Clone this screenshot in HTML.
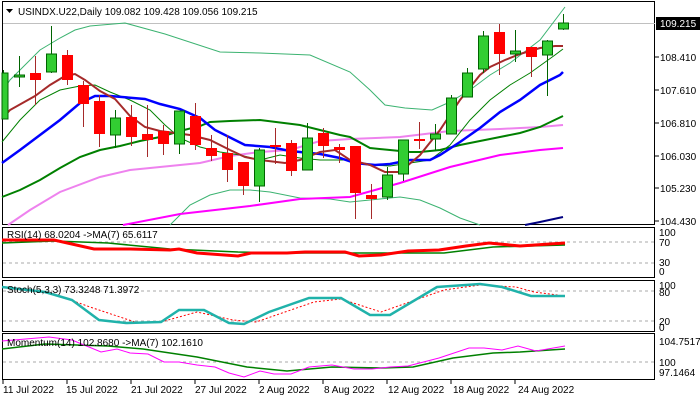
<!DOCTYPE html>
<html><head><meta charset="utf-8"><style>
body{margin:0;background:#fff;width:700px;height:400px;overflow:hidden}
svg{display:block;font-family:"Liberation Sans",sans-serif}
text{font-size:10px;fill:#000}
</style></head><body>
<svg width="700" height="400" viewBox="0 0 700 400" xmlns="http://www.w3.org/2000/svg">
<rect width="700" height="400" fill="#fff"/>
<g fill="none" stroke="#000" stroke-width="1">
<rect x="2.5" y="1.5" width="652" height="223"/>
<rect x="2.5" y="227.5" width="652" height="50"/>
<rect x="2.5" y="280.5" width="652" height="51"/>
<rect x="2.5" y="333.5" width="652" height="46"/>
</g>
<line x1="3" y1="23.5" x2="655" y2="23.5" stroke="#c0c0c0"/>
<polyline fill="none" stroke="#3cb371" stroke-width="1" points="2,92 10,80 20,70 40,50 60,38 75,30 90,26 125,23 165,34 220,52 260,53 310,55 350,72 370,90 385,105 405,108 432,110 450,102 470,90 490,75 510,63 540,40 565,7"/>
<polyline fill="none" stroke="#3cb371" stroke-width="1" points="170,225 190,205 210,195 230,190 250,190 270,192 300,198 330,199 350,202 380,199 400,197 420,200 440,208 460,218 480,225"/>
<polyline fill="none" stroke="#ee82ee" stroke-width="2" points="8,225 30,210 60,192 100,177 130,170 160,167 200,163 230,156 260,152 290,150 320,141 350,139 400,137 450,131 500,129 540,127 563,125"/>
<polyline fill="none" stroke="#ff00ff" stroke-width="2" points="123,225 180,214 250,206 300,199 350,197 400,183 450,167 500,155 540,150 563,148"/>
<polyline fill="none" stroke="#000080" stroke-width="2" points="525,225 540,222 563,217"/>
<polyline fill="none" stroke="#008000" stroke-width="2" points="2,197 20,190 40,180 60,168 80,157 100,150 120,146 140,141 160,137 180,131 200,126 210,122 230,121 260,120 300,125 320,130 340,135 350,137 370,148 390,150 410,152 420,152 440,150 460,145 480,141 500,137 520,133 540,127 563,116"/>
<polyline fill="none" stroke="#008000" stroke-width="1" points="2,142 20,120 40,100 60,90 80,86 95,85 110,92 130,100 150,110 165,125 180,138 200,147 220,152 240,155 260,160 280,155 300,158 320,160 350,160 370,165 390,166 410,163 430,160 450,145 470,120 490,100 510,85 530,73 555,55 563,49"/>
<polyline fill="none" stroke="#0000ff" stroke-width="2.5" points="2,163 20,150 40,135 60,120 80,103 95,96 110,96 145,99 160,104 180,109 200,118 215,130 245,145 270,147 290,151 320,154 340,158 355,163 375,165 390,164 410,160 430,160 440,155 460,142 480,128 500,112 520,100 540,85 560,75 563,72"/>
<polyline fill="none" stroke="#a52a2a" stroke-width="2" points="2,119 10,110 35,96 50,85 65,76 75,74 85,80 100,91 115,99 130,116 145,127 160,131 175,133 190,135 210,140 230,150 245,157 260,160 285,163 300,160 320,152 335,150 350,160 370,165 385,172 400,172 420,155 440,130 460,100 480,75 490,67 505,60 520,54 540,48 555,46 563,46"/>
<g stroke-width="1">
<g stroke="#006400">
<line x1="3.5" y1="70" x2="3.5" y2="119"/><rect x="2" y="73" width="6" height="46" fill="#32cd32"/>
<line x1="19.5" y1="56" x2="19.5" y2="87"/><rect x="14.5" y="75" width="10" height="2" fill="#32cd32"/>
<line x1="51.5" y1="26" x2="51.5" y2="73"/><rect x="46.5" y="54" width="10" height="18" fill="#32cd32"/>
<line x1="115.5" y1="110" x2="115.5" y2="148"/><rect x="110.5" y="118" width="10" height="17" fill="#32cd32"/>
<line x1="179.5" y1="111" x2="179.5" y2="154"/><rect x="174.5" y="111" width="10" height="33" fill="#32cd32"/>
<line x1="259.5" y1="148" x2="259.5" y2="202"/><rect x="254.5" y="150" width="10" height="36" fill="#32cd32"/>
<line x1="307.5" y1="123" x2="307.5" y2="170"/><rect x="302.5" y="138" width="10" height="32" fill="#32cd32"/>
<line x1="387.5" y1="167" x2="387.5" y2="200"/><rect x="382.5" y="175" width="10" height="22" fill="#32cd32"/>
<line x1="403.5" y1="140" x2="403.5" y2="181"/><rect x="398.5" y="140" width="10" height="34" fill="#32cd32"/>
<line x1="435.5" y1="124" x2="435.5" y2="150"/><rect x="430.5" y="134" width="10" height="5" fill="#32cd32"/>
<line x1="451.5" y1="95" x2="451.5" y2="134"/><rect x="446.5" y="98" width="10" height="36" fill="#32cd32"/>
<line x1="467.5" y1="68" x2="467.5" y2="97"/><rect x="462.5" y="73" width="10" height="24" fill="#32cd32"/>
<line x1="483.5" y1="31" x2="483.5" y2="73"/><rect x="478.5" y="36" width="10" height="33" fill="#32cd32"/>
<line x1="515.5" y1="30" x2="515.5" y2="62"/><rect x="510.5" y="51" width="10" height="3" fill="#32cd32"/>
<line x1="547.5" y1="40" x2="547.5" y2="96"/><rect x="542.5" y="41" width="10" height="14" fill="#32cd32"/>
<line x1="563.5" y1="14" x2="563.5" y2="30"/><rect x="558.5" y="23" width="10" height="6" fill="#32cd32"/>
</g>
<g stroke="#a52a2a" fill="#ff0000">
<line x1="35.5" y1="56" x2="35.5" y2="105"/><rect x="30" y="73" width="11" height="7" stroke="none"/>
<line x1="67.5" y1="50" x2="67.5" y2="85"/><rect x="62" y="55" width="11" height="25" stroke="none"/>
<line x1="83.5" y1="81" x2="83.5" y2="127"/><rect x="78" y="85" width="11" height="19" stroke="none"/>
<line x1="99.5" y1="95" x2="99.5" y2="147"/><rect x="94" y="101" width="11" height="33" stroke="none"/>
<line x1="131.5" y1="105" x2="131.5" y2="146"/><rect x="126" y="117" width="11" height="20" stroke="none"/>
<line x1="147.5" y1="105" x2="147.5" y2="157"/><rect x="142" y="134" width="11" height="6" stroke="none"/>
<line x1="163.5" y1="125" x2="163.5" y2="155"/><rect x="158" y="131" width="11" height="13" stroke="none"/>
<line x1="195.5" y1="103" x2="195.5" y2="150"/><rect x="190" y="116" width="11" height="29" stroke="none"/>
<line x1="211.5" y1="135" x2="211.5" y2="161"/><rect x="206" y="148" width="11" height="8" stroke="none"/>
<line x1="227.5" y1="135" x2="227.5" y2="182"/><rect x="222" y="153" width="11" height="17" stroke="none"/>
<line x1="243.5" y1="162" x2="243.5" y2="195"/><rect x="238" y="162" width="11" height="24" stroke="none"/>
<line x1="275.5" y1="128" x2="275.5" y2="164"/><rect x="270" y="145" width="11" height="2" stroke="none"/>
<line x1="291.5" y1="140" x2="291.5" y2="176"/><rect x="286" y="143" width="11" height="28" stroke="none"/>
<line x1="323.5" y1="128" x2="323.5" y2="158"/><rect x="318" y="133" width="11" height="13" stroke="none"/>
<line x1="339.5" y1="144" x2="339.5" y2="163"/><rect x="334" y="147" width="11" height="3" stroke="none"/>
<line x1="355.5" y1="146" x2="355.5" y2="219"/><rect x="350" y="146" width="11" height="47" stroke="none"/>
<line x1="371.5" y1="184" x2="371.5" y2="219"/><rect x="366" y="195" width="11" height="4" stroke="none"/>
<line x1="419.5" y1="122" x2="419.5" y2="149"/><rect x="414" y="139" width="11" height="2" stroke="none"/>
<line x1="499.5" y1="24" x2="499.5" y2="75"/><rect x="494" y="32" width="11" height="22" stroke="none"/>
<line x1="531.5" y1="47" x2="531.5" y2="77"/><rect x="526" y="47" width="11" height="10" stroke="none"/>
</g></g>
<path d="M6 9h7l-3.5 4z" fill="#000"/>
<text x="18" y="15">USINDX.U22,Daily  109.082 109.428 109.056 109.215</text>
<g>
<line x1="655" y1="57" x2="659" y2="57" stroke="#000"/><line x1="655" y1="90" x2="659" y2="90" stroke="#000"/>
<line x1="655" y1="123" x2="659" y2="123" stroke="#000"/><line x1="655" y1="156" x2="659" y2="156" stroke="#000"/>
<line x1="655" y1="188" x2="659" y2="188" stroke="#000"/><line x1="655" y1="221" x2="659" y2="221" stroke="#000"/>
<text x="660" y="61">108.410</text><text x="660" y="94">107.610</text><text x="660" y="127">106.810</text>
<text x="660" y="160">106.030</text><text x="660" y="192">105.230</text><text x="660" y="225">104.430</text>
<rect x="656" y="17" width="44" height="13" fill="#000"/>
<text x="660" y="27" style="fill:#fff">109.215</text>
</g>
<g stroke="#aaa" stroke-dasharray="3,3"><line x1="3" y1="242" x2="654" y2="242"/><line x1="3" y1="263" x2="654" y2="263"/>
<line x1="3" y1="291" x2="654" y2="291"/><line x1="3" y1="321" x2="654" y2="321"/><line x1="3" y1="362" x2="654" y2="362"/></g>
<polyline fill="none" stroke="#008000" stroke-width="1.5" points="2,243 54,241 108,243 170,249 238,252 287,253 381,253 444,253 493,247 565,245"/>
<polyline fill="none" stroke="#ff0000" stroke-width="3" points="2,240 54,240 94,249 130,249 170,250 179,249 197,253 238,256 251,253 287,253 305,252 345,252 359,256 381,255 408,251 439,250 466,246 489,243 520,246 565,243"/>
<text x="7" y="238">RSI(14) 68.0204  -&gt;MA(7) 65.6117</text>
<text x="659" y="236">100</text><text x="659" y="246">70</text><text x="659" y="266">30</text><text x="659" y="275">0</text>
<polyline fill="none" stroke="#ff0000" stroke-width="1" stroke-dasharray="2,2" points="2,287 49,292 90,307 135,322 161,322 197,312 233,320 256,322 314,302 341,299 381,312 444,290 480,285 516,287 534,292 565,296"/>
<polyline fill="none" stroke="#20b2aa" stroke-width="2.5" points="2,287 45,292 72,300 99,320 126,323 161,322 179,310 204,310 229,323 244,324 269,312 309,298 341,298 370,315 390,315 437,287 480,284 502,287 531,296 565,296"/>
<text x="7" y="293">Stoch(5,3,3) 73.3248 71.3972</text>
<text x="659" y="289">100</text><text x="659" y="296">80</text><text x="659" y="325">20</text><text x="659" y="331">0</text>
<polyline fill="none" stroke="#008000" stroke-width="1.5" points="2,349 45,344 108,346 143,349 197,357 247,367 287,371 332,367 381,368 413,367 453,358 493,353 520,352 565,349"/>
<polyline fill="none" stroke="#ff00ff" stroke-width="1" points="2,341 49,337 72,340 101,352 117,349 130,353 148,354 164,362 179,362 197,365 215,367 229,373 244,377 260,371 274,374 291,374 309,367 332,365 354,369 372,369 390,367 408,366 439,358 469,348 484,348 502,350 518,346 536,351 565,346"/>
<text x="7" y="346">Momentum(14) 102.8680  -&gt;MA(7) 102.1610</text>
<text x="659" y="345">104.7517</text><text x="659" y="366">100</text><text x="659" y="376">97.1464</text>
<g stroke="#000"><line x1="3" y1="380" x2="3" y2="384"/><line x1="67" y1="380" x2="67" y2="384"/><line x1="131" y1="380" x2="131" y2="384"/><line x1="195" y1="380" x2="195" y2="384"/><line x1="259" y1="380" x2="259" y2="384"/><line x1="323" y1="380" x2="323" y2="384"/><line x1="387" y1="380" x2="387" y2="384"/><line x1="451" y1="380" x2="451" y2="384"/><line x1="515" y1="380" x2="515" y2="384"/></g>
<text x="3" y="393">11 Jul 2022</text><text x="66" y="393">15 Jul 2022</text><text x="131" y="393">21 Jul 2022</text>
<text x="195" y="393">27 Jul 2022</text><text x="259" y="393">2 Aug 2022</text><text x="324" y="393">8 Aug 2022</text>
<text x="388" y="393">12 Aug 2022</text><text x="453" y="393">18 Aug 2022</text><text x="518" y="393">24 Aug 2022</text>
</svg>
</body></html>
